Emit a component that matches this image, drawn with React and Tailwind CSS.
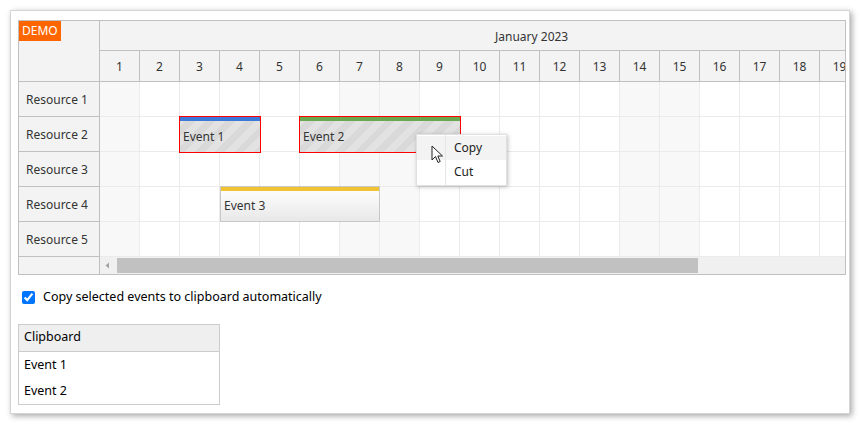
const days = Array.from({ length: 19 }, (_, i) => i + 1);
const weekend = [1, 7, 8, 14, 15];
const resources = ['Resource 1', 'Resource 2', 'Resource 3', 'Resource 4', 'Resource 5'];

const font = { fontFamily: '"Noto Sans", "Open Sans", sans-serif' };

function EventBox({ left, top, width, bar, text, selected }) {
  return (
    <div
      className={`absolute flex flex-col ${selected ? 'border border-[#ff0000] bg-[repeating-linear-gradient(135deg,#e2e2e2_0px,#e2e2e2_7px,#d9d9d9_7px,#d9d9d9_14px)]' : 'border border-[#c8c8c8] bg-[linear-gradient(#ffffff,#e8e8e8)]'}`}
      style={{ left, top, width, height: selected ? 37 : 36 }}
    >
      <div className="h-[4px] w-full shrink-0" style={{ background: bar }} />
      <div className="flex-1 flex items-center pl-[3px] text-[12px] text-[#333]">{text}</div>
    </div>
  );
}

export default function App() {
  return (
    <div className="w-[860px] h-[424px] bg-white pt-[10px] pl-[10px]" style={font}>
      <div className="w-[840px] h-[404px] bg-white border border-[#d4d4d4] shadow-[2px_2px_6px_rgba(0,0,0,0.35)] pl-[7px] pt-[9px]">
        {/* scheduler */}
        <div className="relative w-[828px] border border-[#c0c0c0] flex text-[12px] text-[#333] overflow-hidden">
          <div className="w-[81px] shrink-0 border-r border-[#c0c0c0] bg-[#f3f3f3]">
            <div className="h-[61px] border-b border-[#c0c0c0]">
              <span className="inline-block bg-[#ff6600] text-white text-[12px] leading-[20px] px-[3px]">DEMO</span>
            </div>
            {resources.map((r) => (
              <div key={r} className="h-[35px] border-b border-[#c0c0c0] flex items-center pl-[7px] pt-[2px]">
                {r}
              </div>
            ))}
            <div className="h-[17px]" />
          </div>
          <div className="flex-1 relative overflow-hidden">
            <div className="h-[30px] border-b border-[#c0c0c0] bg-[#f3f3f3] flex items-center pl-[395px] pt-[2px] whitespace-nowrap">
              January 2023
            </div>
            <div className="flex h-[31px] border-b border-[#c0c0c0] bg-[#f3f3f3]">
              {days.map((d) => (
                <div key={d} className="w-[40px] shrink-0 border-r border-[#c0c0c0] flex items-center justify-center pt-[2px]">
                  {d}
                </div>
              ))}
            </div>
            {resources.map((r) => (
              <div key={r} className="flex h-[35px] border-b border-[#ebebeb]">
                {days.map((d) => (
                  <div
                    key={d}
                    className={`w-[40px] shrink-0 border-r border-[#ebebeb] ${weekend.includes(d) ? 'bg-[#f8f8f8]' : 'bg-white'}`}
                  />
                ))}
              </div>
            ))}
            <div className="h-[17px] bg-[#f0f0f0] flex items-center">
              <svg width="17" height="17" viewBox="0 0 17 17" className="shrink-0">
                <path d="M9 5.5 L5.5 8.5 L9 11.5 Z" fill="#a3a3a3" />
              </svg>
              <div className="h-[15px] w-[581px] bg-[#c1c1c1]" />
            </div>

            <EventBox left={79} top={95} width={82} bar="#3c78d8" text="Event 1" selected />
            <EventBox left={199} top={95} width={162} bar="#6aa84f" text="Event 2" selected />
            <EventBox left={120} top={165} width={160} bar="#f1c232" text="Event 3" />

            {/* context menu */}
            <div className="absolute left-[316px] top-[113px] w-[91px] bg-white border border-[#e0e0e0] shadow-[1px_1px_4px_rgba(0,0,0,0.25)] py-px text-[12px] text-[#222]">
              <div className="absolute left-[28px] top-0 bottom-0 w-px bg-[#e6e6e6]" />
              <div className="h-[24px] bg-[#f3f3f3] flex items-center pl-[37px]">Copy</div>
              <div className="h-[24px] flex items-center pl-[37px]">Cut</div>
            </div>
            <svg className="absolute left-[331px] top-[124px]" width="14" height="20" viewBox="0 0 14 20">
              <path d="M1 1 L1 15 L4.5 11.5 L7 17.5 L9.2 16.5 L6.8 11 L11.5 11 Z" fill="white" stroke="#222" strokeWidth="1" strokeLinejoin="round" />
            </svg>
          </div>
        </div>

        {/* option */}
        <label className="flex items-center mt-[13px] ml-[4px] text-[12.5px] text-black">
          <input type="checkbox" defaultChecked className="w-[13px] h-[13px] m-0 accent-[#0075ff]" />
          <span className="ml-[8px]">Copy selected events to clipboard automatically</span>
        </label>

        {/* clipboard */}
        <div className="mt-[17px] w-[202px] border border-[#cccccc] text-[12.5px] text-black">
          <div className="h-[27px] bg-[#efefef] border-b border-[#cccccc] flex items-center pl-[5px]">Clipboard</div>
          <div className="h-[26px] flex items-center pl-[5px] pt-[1px]">Event 1</div>
          <div className="h-[26px] flex items-center pl-[5px] pt-[2px]">Event 2</div>
        </div>
      </div>
    </div>
  );
}
